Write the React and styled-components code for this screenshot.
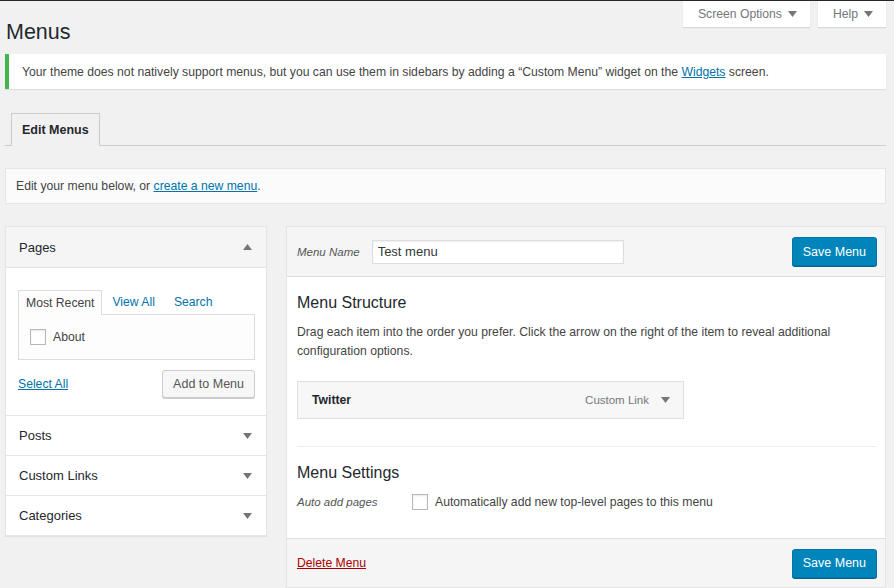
import React from 'react';
import styled, { createGlobalStyle } from 'styled-components';

const GlobalStyle = createGlobalStyle`
  html, body {
    margin: 0;
    background: #f1f1f1;
    font-family: "Liberation Sans", Arial, sans-serif;
    font-size: 12.2px;
    color: #444;
  }
  body {
    border-top: 1px solid #23282d;
  }
`;

const Caret = ({ up, color = '#72777c' }) => (
  <svg width="9" height="6" viewBox="0 0 9 6">
    {up
      ? <polygon points="0,6 9,6 4.5,0" fill={color} />
      : <polygon points="0,0 9,0 4.5,6" fill={color} />}
  </svg>
);

function App() {
  return (
    <>
      <GlobalStyle />
      <Wrap>
        <Header>
          <Title>Menus</Title>
          <MetaLinks>
            <MetaButton>Screen Options <Caret /></MetaButton>
            <MetaButton>Help <Caret /></MetaButton>
          </MetaLinks>
        </Header>

        <Notice>
          Your theme does not natively support menus, but you can use them in sidebars by adding a “Custom Menu” widget on the&nbsp;<Link href="#">Widgets</Link>&nbsp;screen.
        </Notice>

        <TabNav>
          <NavTab>Edit Menus</NavTab>
        </TabNav>

        <ManageBox>
          Edit your menu below, or&nbsp;<Link href="#">create a new menu</Link>.
        </ManageBox>

        <Columns>
          <SideColumn>
            <AccordionHead open>
              Pages <Caret up />
            </AccordionHead>
            <AccordionBody>
              <InnerTabs>
                <InnerTab active>Most Recent</InnerTab>
                <InnerTab>View All</InnerTab>
                <InnerTab>Search</InnerTab>
              </InnerTabs>
              <TabPanel>
                <CheckRow>
                  <CheckBox />
                  About
                </CheckRow>
              </TabPanel>
              <ActionRow>
                <Link href="#">Select All</Link>
                <SecondaryButton>Add to Menu</SecondaryButton>
              </ActionRow>
            </AccordionBody>
            <AccordionHead>
              Posts <Caret />
            </AccordionHead>
            <AccordionHead>
              Custom Links <Caret />
            </AccordionHead>
            <AccordionHead>
              Categories <Caret />
            </AccordionHead>
          </SideColumn>

          <MenuEdit>
            <MenuHeader>
              <NameField>
                <FieldLabel>Menu Name</FieldLabel>
                <NameInput defaultValue="Test menu" />
              </NameField>
              <PrimaryButton>Save Menu</PrimaryButton>
            </MenuHeader>

            <MenuBody>
              <SectionTitle>Menu Structure</SectionTitle>
              <Description>
                Drag each item into the order you prefer. Click the arrow on the right of the item to reveal additional configuration options.
              </Description>
              <MenuItem>
                <ItemTitle>Twitter</ItemTitle>
                <ItemControls>
                  Custom Link <Caret />
                </ItemControls>
              </MenuItem>

              <Divider />

              <SectionTitle>Menu Settings</SectionTitle>
              <SettingRow>
                <FieldLabel wide>Auto add pages</FieldLabel>
                <CheckRow>
                  <CheckBox />
                  Automatically add new top-level pages to this menu
                </CheckRow>
              </SettingRow>
            </MenuBody>

            <MenuFooter>
              <DeleteLink href="#">Delete Menu</DeleteLink>
              <PrimaryButton>Save Menu</PrimaryButton>
            </MenuFooter>
          </MenuEdit>
        </Columns>
      </Wrap>
    </>
  );
}

const Wrap = styled.div`
  padding: 0 8px 0 5px;
`;

const Header = styled.div`
  display: flex;
  justify-content: space-between;
  align-items: flex-start;
  height: 53px;
`;

const Title = styled.h1`
  margin: 17px 0 0 1px;
  font-size: 21.5px;
  font-weight: 400;
  line-height: 29px;
  color: #23282d;
`;

const MetaLinks = styled.div`
  display: flex;
  gap: 8px;
`;

const MetaButton = styled.div`
  height: 26px;
  padding: 0 13px 0 15px;
  display: flex;
  align-items: center;
  gap: 6px;
  background: #fff;
  color: #72777c;
  font-size: 12.2px;
  box-shadow: 0 1px 1px rgba(0, 0, 0, 0.1);
`;

const Link = styled.a`
  color: #0073aa;
  text-decoration: underline;
`;

const Notice = styled.div`
  height: 35px;
  display: flex;
  align-items: center;
  padding-left: 13px;
  background: #fff;
  border-left: 4px solid #46b450;
  box-shadow: 0 1px 1px rgba(0, 0, 0, 0.08);
`;

const TabNav = styled.div`
  margin-top: 24px;
  padding-left: 6px;
  border-bottom: 1px solid #ccc;
  display: flex;
`;

const NavTab = styled.div`
  height: 31px;
  padding: 0 10px 1px;
  display: flex;
  align-items: center;
  border: 1px solid #ccc;
  border-bottom: none;
  background: #f1f1f1;
  font-size: 12.5px;
  font-weight: 700;
  color: #23282d;
  margin-bottom: -1px;
`;

const ManageBox = styled.div`
  margin-top: 22px;
  height: 34px;
  display: flex;
  align-items: center;
  padding-left: 10px;
  background: #fbfbfb;
  border: 1px solid #e5e5e5;
`;

const Columns = styled.div`
  margin-top: 22px;
  display: flex;
  align-items: flex-start;
  gap: 19px;
`;

const SideColumn = styled.div`
  width: 262px;
  flex-shrink: 0;
  background: #fff;
  border: 1px solid #e5e5e5;
  border-top: none;
  box-shadow: 0 1px 1px rgba(0, 0, 0, 0.06);
  box-sizing: border-box;
`;

const AccordionHead = styled.div`
  height: ${p => (p.open ? '40px' : '39px')};
  display: flex;
  align-items: center;
  justify-content: space-between;
  padding: 0 14px 0 13px;
  border-top: 1px solid #e5e5e5;
  border-bottom: ${p => (p.open ? '1px solid #e5e5e5' : 'none')};
  background: ${p => (p.open ? '#f5f5f5' : '#fff')};
  font-size: 13px;
  color: #23282d;
`;

const AccordionBody = styled.div`
  padding: 21px 11px 17px 12px;
`;

const InnerTabs = styled.div`
  display: flex;
  align-items: flex-end;
`;

const InnerTab = styled.div`
  height: 24px;
  padding: 0 7px 0 7px;
  display: flex;
  align-items: center;
  margin-right: ${p => (p.active ? '2px' : '3px')};
  color: ${p => (p.active ? '#444' : '#0073aa')};
  background: ${p => (p.active ? '#fdfdfd' : 'transparent')};
  border: 1px solid ${p => (p.active ? '#ddd' : 'transparent')};
  border-bottom: none;
  margin-bottom: ${p => (p.active ? '-1px' : '0')};
  position: relative;
`;

const TabPanel = styled.div`
  height: 44px;
  border: 1px solid #ddd;
  background: #fdfdfd;
  display: flex;
  align-items: center;
  padding-left: 11px;
`;

const CheckRow = styled.label`
  display: flex;
  align-items: center;
  gap: 7px;
  color: #444;
`;

const CheckBox = styled.span`
  width: 14px;
  height: 14px;
  border: 1px solid #b4b9be;
  background: #fff;
  box-shadow: inset 0 1px 2px rgba(0, 0, 0, 0.1);
`;

const ActionRow = styled.div`
  margin-top: 10px;
  display: flex;
  align-items: center;
  justify-content: space-between;
`;

const SecondaryButton = styled.button`
  height: 28px;
  padding: 0 10px;
  font: inherit;
  font-size: 12.5px;
  color: #555;
  background: #f7f7f7;
  border: 1px solid #ccc;
  border-radius: 3px;
  box-shadow: 0 1px 0 #ccc;
`;

const MenuEdit = styled.div`
  flex: 1;
  background: #fff;
  border: 1px solid #e5e5e5;
  box-shadow: 0 1px 1px rgba(0, 0, 0, 0.04);
`;

const MenuHeader = styled.div`
  height: 49px;
  display: flex;
  align-items: center;
  justify-content: space-between;
  padding: 0 8px 0 10px;
  background: #f5f5f5;
  border-bottom: 1px solid #dfdfdf;
`;

const NameField = styled.div`
  display: flex;
  align-items: center;
  gap: 12px;
`;

const FieldLabel = styled.span`
  width: ${p => (p.wide ? '115px' : 'auto')};
  font-style: italic;
  font-size: 11.5px;
  color: #555;
`;

const NameInput = styled.input`
  width: 240px;
  height: 22px;
  padding: 0 5px;
  font: inherit;
  font-size: 13px;
  color: #32373c;
  border: 1px solid #ddd;
  background: #fff;
  box-shadow: inset 0 1px 2px rgba(0, 0, 0, 0.07);
  outline: none;
`;

const PrimaryButton = styled.button`
  height: 29px;
  padding: 0 10px;
  font: inherit;
  font-size: 12.5px;
  color: #fff;
  background: #0085ba;
  border: 1px solid #0073aa;
  border-radius: 3px;
  box-shadow: 0 1px 0 #006799;
`;

const MenuBody = styled.div`
  padding: 16px 8px 28px 10px;
`;

const SectionTitle = styled.h3`
  margin: 0;
  font-size: 16px;
  font-weight: 400;
  line-height: 20px;
  color: #23282d;
`;

const Description = styled.p`
  margin: 10px 0 0;
  line-height: 19px;
  color: #444;
`;

const MenuItem = styled.div`
  margin-top: 20px;
  width: 387px;
  height: 38px;
  box-sizing: border-box;
  display: flex;
  align-items: center;
  justify-content: space-between;
  padding: 0 13px 0 14px;
  background: #f7f7f7;
  border: 1px solid #dfdfdf;
`;

const ItemTitle = styled.span`
  font-weight: 700;
  color: #23282d;
`;

const ItemControls = styled.span`
  display: flex;
  align-items: center;
  gap: 12px;
  font-size: 11.5px;
  color: #72777c;
`;

const Divider = styled.div`
  margin: 27px 0 16px;
  border-top: 1px solid #eee;
`;

const SettingRow = styled.div`
  margin-top: 11px;
  display: flex;
  align-items: center;
`;

const MenuFooter = styled.div`
  height: 48px;
  display: flex;
  align-items: center;
  justify-content: space-between;
  padding: 0 8px 0 10px;
  background: #f5f5f5;
  border-top: 1px solid #dfdfdf;
`;

const DeleteLink = styled.a`
  color: #a00;
  text-decoration: underline;
`;

export default App;
